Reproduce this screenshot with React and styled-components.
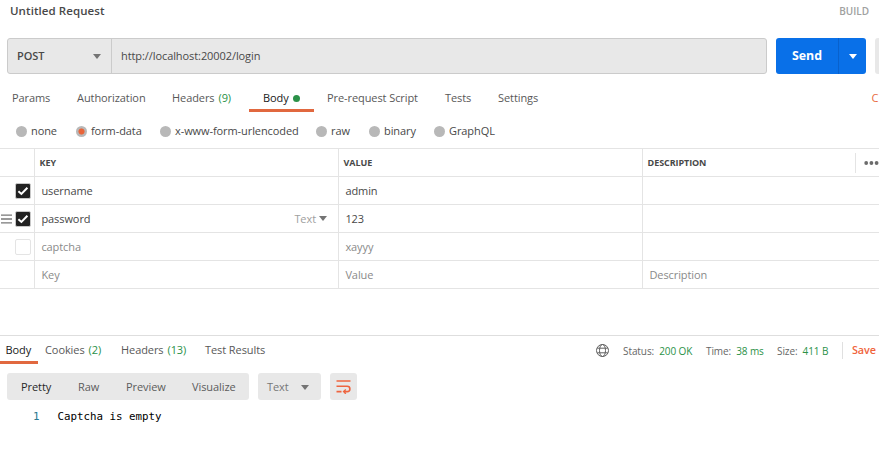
import React from "react";
import styled, { createGlobalStyle } from "styled-components";

const GlobalStyle = createGlobalStyle`
  * { box-sizing: border-box; }
  body {
    margin: 0;
    overflow: hidden;
    background: #fff;
    color: #484848;
    font: 11px/16px "Open Sans", sans-serif;
    letter-spacing: -0.08px;
  }
`;

const Page = styled.main`
  width: 879px;
  height: 449px;
  overflow: hidden;
  display: flex;
  flex-direction: column;
  white-space: nowrap;
`;

const TitleBar = styled.header`
  height: 38px;
  padding: 3px 10px 0;
  display: flex;
  justify-content: space-between;
`;

const Title = styled.h1`
  margin: 0;
  font-size: 11.5px;
  line-height: 16px;
  font-weight: 600;
  letter-spacing: 0.08px;
`;

const BuildLabel = styled.span`
  font-size: 10px;
  font-weight: 600;
  letter-spacing: 0;
  color: #a0a0a0;
`;

const RequestBar = styled.section`
  height: 36px;
  padding-left: 7px;
  display: flex;
  flex: none;
`;

const UrlGroup = styled.div`
  width: 760px;
  flex: none;
  display: flex;
  border: 1px solid #cbcbcb;
  border-radius: 3px;
  background: #e8e8e8;
`;

const MethodSelect = styled.div`
  width: 104px;
  padding: 0 10px 0 9px;
  display: flex;
  align-items: center;
  justify-content: space-between;
  border-right: 1px solid #cbcbcb;
  font-weight: 600;
`;

const UrlField = styled.div`
  padding-left: 9px;
  line-height: 34px;
`;

const Caret = styled.i`
  width: 0;
  height: 0;
  flex: none;
  border: 4px solid transparent;
  border-top: 5px solid ${(p) => p.$color || "#747474"};
  border-bottom: 0;
`;

const SendButton = styled.div`
  width: 90px;
  flex: none;
  margin: 0 9px;
  display: flex;
  border-radius: 3px;
  background: #0970e8;
  color: #fff;
`;

const SendLabel = styled.span`
  width: 63px;
  text-align: center;
  font-size: 12.4px;
  font-weight: 700;
  line-height: 35px;
  border-right: 1px solid #0861cd;
`;

const SendMenu = styled.span`
  flex: 1;
  display: flex;
  align-items: center;
  justify-content: center;
  padding-top: 1px;
`;

const SaveButton = styled.div`
  width: 40px;
  flex: none;
  border-radius: 3px;
  background: #e8e8e8;
`;

const TabBar = styled.nav`
  height: 38px;
  flex: none;
  display: flex;
`;

const Tab = styled.div`
  width: ${(p) => p.$width}px;
  flex: none;
  height: 38px;
  padding: 13px 0 0 ${(p) => p.$pad ?? 14}px;
  display: flex;
  align-items: center;
  gap: 4px;
  color: ${(p) => (p.$active ? "#202020" : "#585858")};
  border-bottom: 3px solid ${(p) => (p.$active ? "#e1683f" : "transparent")};
`;

const Count = styled.span`
  color: #2a9147;
`;

const Dot = styled.i`
  width: 7px;
  height: 7px;
  border-radius: 50%;
  background: #2b9148;
`;

const CookiesLink = styled.div`
  padding: 16px 0 0 294.5px;
  color: #e96a42;
`;

const BodyTypes = styled.div`
  height: 36px;
  flex: none;
  display: flex;
  align-items: center;
  padding: 2px 0 0 16px;
`;

const BodyType = styled.div`
  width: ${(p) => p.$width}px;
  flex: none;
  display: flex;
  align-items: center;
  gap: 4px;
`;

const Radio = styled.i`
  width: 11px;
  height: 11px;
  flex: none;
  border-radius: 50%;
  background: ${(p) => (p.$on ? "radial-gradient(circle, #e9653a 2.7px, #b8b8b8 3.4px)" : "#b8b8b8")};
`;

const Table = styled.div`
  flex: none;
  border-top: 1px solid #e4e4e4;
`;

const Row = styled.div`
  height: 28px;
  display: grid;
  grid-template-columns: 35px 304px 304px 1fr;
  border-bottom: 1px solid #e4e4e4;
  color: ${(p) => (p.$muted ? "#8a8a8a" : "#484848")};
`;

const Cell = styled.div`
  display: flex;
  align-items: center;
  justify-content: space-between;
  padding-left: 6.4px;
  border-right: 1px solid #e4e4e4;
  &:last-child { border-right: 0; }
`;

const HeadCell = styled(Cell)`
  padding-left: 4.6px;
  font-size: 9px;
  font-weight: 700;
`;

const ControlCell = styled(Cell)`
  justify-content: flex-end;
  padding: 0 3px 0 0;
  gap: 3px;
`;

const Checkbox = styled.span`
  width: 16px;
  height: 16px;
  flex: none;
  display: flex;
  align-items: center;
  justify-content: center;
  border: 1px solid ${(p) => (p.$on ? "#c8c8c8" : "#e4e4e4")};
  border-radius: 2px;
  background: ${(p) => (p.$on ? "#222" : "#fff")};
`;

const FieldType = styled.span`
  display: flex;
  align-items: center;
  gap: 3px;
  padding-right: 11px;
  color: #a0a0a0;
`;

const MoreActions = styled.span`
  width: 24px;
  height: 20px;
  display: flex;
  align-items: center;
  justify-content: flex-end;
  border-left: 1px solid #e4e4e4;
`;

const Response = styled.section`
  margin-top: 46px;
  border-top: 1px solid #dedede;
`;

const ResponseHeader = styled.div`
  height: 28px;
  display: flex;
`;

const ResponseTab = styled(Tab)`
  height: 28px;
  padding-top: 3px;
`;

const Meta = styled.div`
  flex: none;
  width: ${(p) => p.$width}px;
  display: flex;
  align-items: center;
  gap: 5px;
  padding-top: 1px;
  font-size: 10px;
  color: #666;
`;

const MetaValue = styled.span`
  color: #2a9147;
  font-weight: 500;
`;

const SaveLink = styled.div`
  height: 17px;
  margin-top: 6px;
  padding-left: 9px;
  border-left: 1px solid #e0e0e0;
  color: #f0643b;
  font-size: 10.8px;
  font-weight: 600;
`;

const Toolbar = styled.div`
  display: flex;
  gap: 9px;
  padding: 9px 7px 0;
`;

const ViewModes = styled.div`
  width: 242px;
  height: 27px;
  display: flex;
  align-items: center;
  padding: 1px 0 0 14px;
  border-radius: 3px;
  background: #e8e8e8;
`;

const ViewMode = styled.span`
  width: ${(p) => p.$width}px;
  flex: none;
  color: ${(p) => (p.$active ? "#282828" : "#5c5c5c")};
`;

const FormatSelect = styled.div`
  width: 63px;
  padding: 1px 12px 0 9px;
  display: flex;
  align-items: center;
  justify-content: space-between;
  border-radius: 3px;
  background: #e8e8e8;
  color: #777;
`;

const WrapButton = styled.div`
  width: 27px;
  height: 27px;
  display: flex;
  align-items: center;
  justify-content: center;
  border-radius: 3px;
  background: #e8e8e8;
`;

const CodeLine = styled.div`
  display: flex;
  padding: 9px 0 0 33px;
  font: 10.8px/16px "DejaVu Sans Mono", monospace;
  letter-spacing: 0;
  color: #000;
`;

const LineNumber = styled.span`
  width: 24.5px;
  color: #2c788f;
`;

const CheckIcon = () => (
  <svg width="12" height="12" viewBox="0 0 12 12" fill="none" stroke="#fff" strokeWidth="2">
    <path d="M1.4 6.2 4.4 8.9 10.4 2.8" />
  </svg>
);

const DragIcon = () => (
  <svg width="11" height="10" viewBox="0 0 11 10" stroke="#787878" strokeWidth="1.3">
    <path d="M0 1.2H11M0 5H11M0 8.8H11" />
  </svg>
);

const DotsIcon = () => (
  <svg width="15" height="4" viewBox="0 0 15 4" fill="#6b6b6b">
    <circle cx="2.2" cy="2" r="1.9" />
    <circle cx="7.4" cy="2" r="1.9" />
    <circle cx="12.6" cy="2" r="1.9" />
  </svg>
);

const GlobeIcon = () => (
  <svg width="14" height="14" viewBox="0 0 14 14" fill="none" stroke="#606060" strokeWidth="1">
    <circle cx="6.5" cy="6.5" r="6" />
    <ellipse cx="6.5" cy="6.5" rx="3" ry="6" />
    <path d="M1.2 4.2H11.8M1.2 8.8H11.8" />
  </svg>
);

const WrapIcon = () => (
  <svg width="15" height="15" viewBox="0 0 15 15" fill="none" stroke="#ee6540" strokeWidth="1.6">
    <path d="M.5 2H14.5M.5 7.3H11.2C14.8 7.3 14.8 12.6 11.2 12.6H8M.5 12.6H5.5" />
    <path d="M9.8 10.4 7.6 12.6 9.8 14.8" strokeWidth="1.4" />
  </svg>
);

const rows = [
  { key: "username", value: "admin", checked: true },
  { key: "password", value: "123", checked: true, hovered: true },
  { key: "captcha", value: "xayyy", checked: false, muted: true },
];

const bodyTypes = [
  ["none", 60],
  ["form-data", 84],
  ["x-www-form-urlencoded", 156],
  ["raw", 53],
  ["binary", 65],
  ["GraphQL", 80],
];

export default function App() {
  return (
    <Page>
      <GlobalStyle />
      <TitleBar>
        <Title>Untitled Request</Title>
        <BuildLabel>BUILD</BuildLabel>
      </TitleBar>
      <RequestBar>
        <UrlGroup>
          <MethodSelect>POST<Caret /></MethodSelect>
          <UrlField>http://localhost:20002/login</UrlField>
        </UrlGroup>
        <SendButton>
          <SendLabel>Send</SendLabel>
          <SendMenu><Caret $color="#fff" /></SendMenu>
        </SendButton>
        <SaveButton />
      </RequestBar>
      <TabBar>
        <Tab $width={63} $pad={12}>Params</Tab>
        <Tab $width={95}>Authorization</Tab>
        <Tab $width={91}>Headers <Count>(9)</Count></Tab>
        <Tab $width={65} $active>Body <Dot /></Tab>
        <Tab $width={117} $pad={13}>Pre-request Script</Tab>
        <Tab $width={53}>Tests</Tab>
        <Tab $width={93}>Settings</Tab>
        <CookiesLink>C</CookiesLink>
      </TabBar>
      <BodyTypes>
        {bodyTypes.map(([name, width]) => (
          <BodyType key={name} $width={width}>
            <Radio $on={name === "form-data"} />
            {name}
          </BodyType>
        ))}
      </BodyTypes>
      <Table>
        <Row>
          <HeadCell />
          <HeadCell>KEY</HeadCell>
          <HeadCell>VALUE</HeadCell>
          <HeadCell>DESCRIPTION<MoreActions><DotsIcon /></MoreActions></HeadCell>
        </Row>
        {rows.map((r) => (
          <Row key={r.key} $muted={r.muted}>
            <ControlCell>
              {r.hovered && <DragIcon />}
              <Checkbox $on={r.checked}>{r.checked && <CheckIcon />}</Checkbox>
            </ControlCell>
            <Cell>
              {r.key}
              {r.hovered && <FieldType>Text<Caret /></FieldType>}
            </Cell>
            <Cell>{r.value}</Cell>
            <Cell />
          </Row>
        ))}
        <Row $muted>
          <Cell />
          <Cell>Key</Cell>
          <Cell>Value</Cell>
          <Cell>Description</Cell>
        </Row>
      </Table>
      <Response>
        <ResponseHeader>
          <ResponseTab $width={38} $pad={5.5} $active>Body</ResponseTab>
          <ResponseTab $width={76} $pad={7}>Cookies <Count>(2)</Count></ResponseTab>
          <ResponseTab $width={84} $pad={7}>Headers <Count>(13)</Count></ResponseTab>
          <ResponseTab $width={398} $pad={7}>Test Results</ResponseTab>
          <Meta $width={27}><GlobeIcon /></Meta>
          <Meta $width={83}>Status: <MetaValue>200 OK</MetaValue></Meta>
          <Meta $width={71}>Time: <MetaValue>38 ms</MetaValue></Meta>
          <Meta $width={65}>Size: <MetaValue>411 B</MetaValue></Meta>
          <SaveLink>Save</SaveLink>
        </ResponseHeader>
        <Toolbar>
          <ViewModes>
            <ViewMode $width={57} $active>Pretty</ViewMode>
            <ViewMode $width={48}>Raw</ViewMode>
            <ViewMode $width={66}>Preview</ViewMode>
            <ViewMode $width={50}>Visualize</ViewMode>
          </ViewModes>
          <FormatSelect>Text<Caret /></FormatSelect>
          <WrapButton><WrapIcon /></WrapButton>
        </Toolbar>
        <CodeLine><LineNumber>1</LineNumber>Captcha is empty</CodeLine>
      </Response>
    </Page>
  );
}
